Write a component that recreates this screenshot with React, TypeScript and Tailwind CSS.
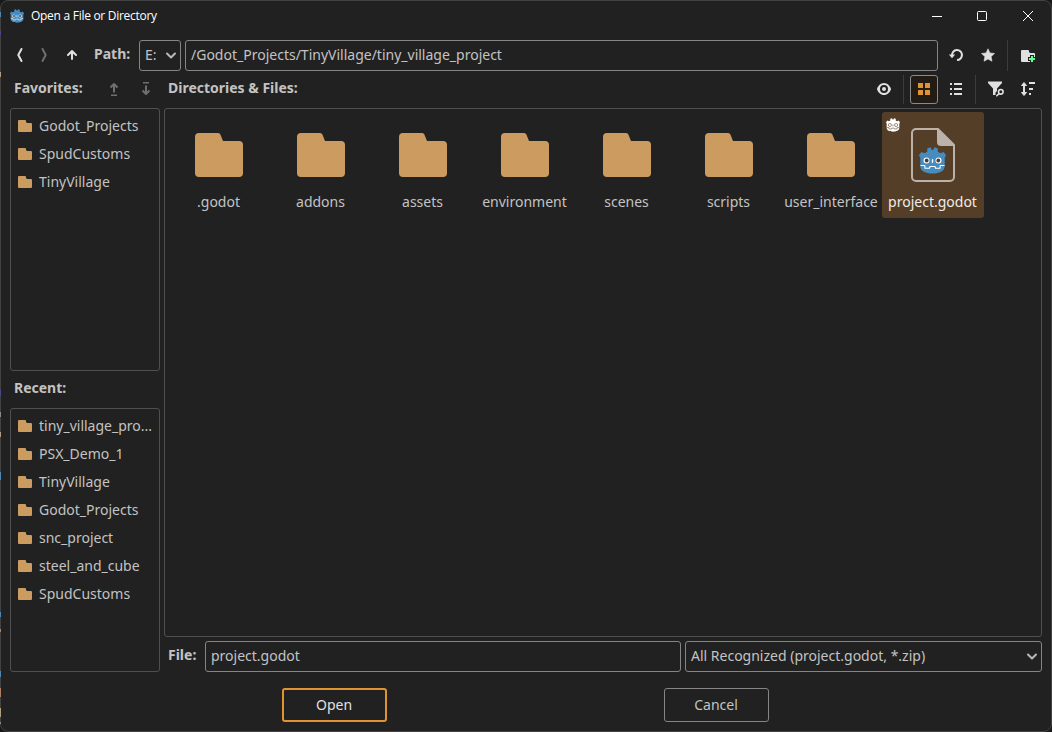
import React from "react";

type IconProps = { className?: string };

const FolderSmall = () => (
  <svg width="14" height="12" viewBox="0 0 14 12" className="shrink-0">
    <path fill="#cc9b60" d="M1 0h6a1 1 0 0 1 1 1v1l1 1h4a1 1 0 0 1 1 1v7a1 1 0 0 1-1 1H1a1 1 0 0 1-1-1V1a1 1 0 0 1 1-1z" />
  </svg>
);

const FolderBig = () => (
  <svg width="48" height="44" viewBox="0 0 48 44">
    <path fill="#cc9b60" d="M4 0h19c1.300 0 2 .7 2.500 1.800L28 8h16a4 4 0 0 1 4 4v28a4 4 0 0 1-4 4H4a4 4 0 0 1-4-4V4a4 4 0 0 1 4-4z" />
  </svg>
);

const HEAD =
  "M0 8 2.600 5 5.500 6.200 8.300 4.600 8.200 1.500 11.500 .3 12.800 3h1.400L15.500.3l3.300 1.200-.1 3.100 2.800 1.600L24.400 5 27 8l-1.300 3v8.500c0 4.500-5.700 7-12.200 7s-12.200-2.500-12.200-7V11z";

const GodotHead = ({ size, className }: { size: number; className?: string }) => (
  <svg width={size} height={size} viewBox="0 0 27 27" className={className}>
    <path fill="#478cbf" d={HEAD} />
    <circle cx="7.500" cy="13.500" r="3" fill="#fff" />
    <circle cx="19.500" cy="13.500" r="3" fill="#fff" />
    <circle cx="7.700" cy="13.500" r="1.900" fill="#414042" />
    <circle cx="19.300" cy="13.500" r="1.900" fill="#414042" />
    <path stroke="#fff" strokeWidth="1.400" strokeLinecap="round" d="M13.500 12.700v2.600" />
    <path fill="none" stroke="#fff" strokeWidth="1.100" d="M1.500 18.500h4.200l.3 2.700h4.500l.5-1.700h5l.5 1.700H21l.3-2.700h4.200" />
  </svg>
);

const GodotMono = () => (
  <svg width="14" height="14" viewBox="0 0 27 27">
    <path fill="#fff" d={HEAD} />
    <circle cx="7.500" cy="13.500" r="3" fill="#fff" stroke="#8b7a66" strokeWidth="1.600" />
    <circle cx="19.500" cy="13.500" r="3" fill="#fff" stroke="#8b7a66" strokeWidth="1.600" />
    <path stroke="#8b7a66" strokeWidth="1.600" d="M13.500 12.500v3.500" />
    <path fill="none" stroke="#8b7a66" strokeWidth="1.600" d="M1.500 18.500h4.200l.3 2.700h4.500l.5-1.700h5l.5 1.700H21l.3-2.700h4.200" />
  </svg>
);

const Svg = ({ className = "", children }: IconProps & { children: React.ReactNode }) => (
  <svg width="16" height="16" viewBox="0 0 16 16" fill="none" className={`shrink-0 ${className}`}>
    {children}
  </svg>
);

const Chevron = () => (
  <Svg className="text-[#b9b9b9]">
    <path d="m4 6.500 4 4 4-4" stroke="currentColor" strokeWidth="2" strokeLinecap="round" strokeLinejoin="round" />
  </Svg>
);

const Shift = ({ down = false }: { down?: boolean }) => (
  <Svg className={down ? "-mt-px rotate-180 text-[#6f6f6f]" : "-mt-px text-[#6f6f6f]"}>
    <path d="M8 11.500V3M4.500 6.500 8 3l3.500 3.500" stroke="currentColor" strokeWidth="2" strokeLinecap="butt" strokeLinejoin="round" />
    <path d="M5 14.250h6" stroke="currentColor" strokeWidth="1.500" />
  </Svg>
);

const SideList = ({ items, className }: { items: string[]; className: string }) => (
  <ul className={`rounded-[3px] border border-[#505050] pt-[3px] ${className}`}>
    {items.map((name) => (
      <li key={name} className="flex h-7 items-center gap-[7px] pl-[7px]">
        <FolderSmall />
        <span className="whitespace-nowrap">{name}</span>
      </li>
    ))}
  </ul>
);

const favorites = ["Godot_Projects", "SpudCustoms", "TinyVillage"];
const recent = ["tiny_village_pro...", "PSX_Demo_1", "TinyVillage", "Godot_Projects", "snc_project", "steel_and_cube", "SpudCustoms"];
const folders = [".godot", "addons", "assets", "environment", "scenes", "scripts", "user_interface"];

export default function App() {
  return (
    <div className="relative h-[732px] w-[1052px] overflow-hidden bg-[#191919]">
      <div className="flex h-[732px] w-[1052px] flex-col rounded-[8px] border border-[#424242] bg-[#212121] font-['Noto_Sans',sans-serif] text-[14px] leading-[20px] text-[#c3c3c3]">
        <header className="flex h-[30px] shrink-0 items-center pl-[9px] text-white">
          <GodotHead size={14} />
          <span className="ml-[7px] font-['Open_Sans',sans-serif] text-[12px] tracking-[-0.280px]">Open a File or Directory</span>
          <div className="ml-auto flex items-center">
            <svg width="10" height="10" className="mr-[35px]"><path d="M0 5.500h10" stroke="#fff" /></svg>
            <svg width="10" height="10" className="mr-[36px]"><rect x=".5" y=".5" width="9" height="9" rx="1" fill="none" stroke="#fff" /></svg>
            <svg width="10" height="10" className="mr-[18px]"><path d="m0 0 10 10M10 0 0 10" stroke="#fff" /></svg>
          </div>
        </header>

        <div className="mt-[9px] flex h-[31px] shrink-0 items-center pl-[11px]">
          <Svg className="-mt-px text-[#e0e0e0]"><path d="M9.500 2 6.300 8l3.200 6" stroke="currentColor" strokeWidth="2" strokeLinecap="round" strokeLinejoin="round" /></Svg>
          <Svg className="-mt-px ml-[8px] text-[#6f6f6f]"><path d="m6.500 2 3.200 6-3.200 6" stroke="currentColor" strokeWidth="2" strokeLinecap="round" strokeLinejoin="round" /></Svg>
          <Svg className="-mt-px ml-[12px] text-[#e0e0e0]"><path d="M8 12V5M4 8l4-4 4 4" stroke="currentColor" strokeWidth="2" strokeLinecap="round" strokeLinejoin="round" /></Svg>
          <span className="-mt-[3px] ml-[14px] w-[45px] font-bold">Path:</span>
          <div className="flex h-[31px] w-[42px] items-center justify-between rounded-[3px] border border-[#858585] pb-px pl-[5px] pr-[1px]">
            <span>E:</span>
            <Chevron />
          </div>
          <div className="ml-1 flex h-[31px] w-[753px] items-center rounded-[3px] border border-[#858585] pb-[2px] pl-[5px]">
            /Godot_Projects/TinyVillage/tiny_village_project
          </div>
          <Svg className="-mt-px ml-[10px] text-[#e0e0e0]">
            <path d="M4 8.500A5 5 0 1 1 9 13" stroke="currentColor" strokeWidth="2" />
            <path d="M.8 7.500h6.400L4 11.300z" fill="currentColor" />
          </Svg>
          <Svg className="-mt-px ml-[16px] text-[#e0e0e0]">
            <path d="m8 1.800 1.900 4.100 4.600.6-3.400 3.100.9 4.600L8 12l-4 2.200.9-4.600L1.500 6.500l4.600-.6z" fill="currentColor" stroke="currentColor" strokeWidth=".6" strokeLinejoin="round" />
          </Svg>
          <div className="ml-[11px] h-[31px] w-px bg-[#3c3c3c]" />
          <Svg className="ml-[12px]">
            <path fill="#e0e0e0" d="M2 2h6a1 1 0 0 1 1 1v1l1 1h4a1 1 0 0 1 1 1v3h-1V7h-4v2H8v4h2v1H2a1 1 0 0 1-1-1V3a1 1 0 0 1 1-1z" />
            <path fill="#5fff97" d="M11 8h2v2h2v2h-2v2h-2v-2H9v-2h2z" />
          </Svg>
        </div>

        <div className="mt-1 flex h-[29px] shrink-0 items-center pl-[13px]">
          <span className="-mt-[3px] w-[92px] font-bold">Favorites:</span>
          <Shift />
          <div className="w-4" />
          <Shift down />
          <span className="-mt-[3px] ml-[14px] w-[708px] font-bold">Directories &amp; Files:</span>
          <Svg className="-mt-[2px] text-[#e0e0e0]">
            <path fillRule="evenodd" fill="currentColor" d="M8 2C4.500 2 2 5 1.100 7.600a1 1 0 0 0 0 .8C2 11 4.500 14 8 14s6-3 6.900-5.600a1 1 0 0 0 0-.8C14 5 11.500 2 8 2zm0 2a4 4 0 1 1 0 8 4 4 0 0 1 0-8zm0 2a2 2 0 1 0 0 4 2 2 0 0 0 0-4z" />
          </Svg>
          <div className="ml-[11px] h-[29px] w-px bg-[#3c3c3c]" />
          <div className="ml-[6px] flex h-[29px] w-[28px] items-center justify-center rounded-[3px] border border-[#8a8a8a] bg-[#231c14] pb-px">
            <Svg className="text-[#e09431]"><path fill="currentColor" d="M2 2h5v5H2zM9 2h5v5H9zM2 9h5v5H2zM9 9h5v5H9z" /></Svg>
          </div>
          <Svg className="-mt-px ml-[10px] text-[#e0e0e0]"><path fill="currentColor" d="M2 2h2v2H2zM6 2h8v2H6zM2 7h2v2H2zM6 7h8v2H6zM2 12h2v2H2zM6 12h8v2H6z" /></Svg>
          <div className="ml-[11px] h-[29px] w-px bg-[#3c3c3c]" />
          <Svg className="-mt-px ml-[12px] text-[#e0e0e0]">
            <path fill="currentColor" d="M0 0.500h14v1.500L9 7.500V10l-1.500 1.500V14H5V7.500L0 2z" />
            <circle cx="12.800" cy="10.800" r="2.300" stroke="currentColor" strokeWidth="1.600" />
            <path d="m11 12.600-2.200 2.200" stroke="currentColor" strokeWidth="1.600" strokeLinecap="round" />
          </Svg>
          <Svg className="-mt-px ml-[16px] text-[#e0e0e0]">
            <path d="M4 3v10" stroke="currentColor" strokeWidth="2" />
            <path fill="currentColor" stroke="currentColor" strokeLinejoin="round" d="m4 1.500 2.500 3h-5zM4 14.500l2.500-3h-5z" />
            <path fill="currentColor" d="M9 1h6v2H9zM9 7h4v2H9zM9 12h2v2H9z" />
          </Svg>
        </div>

        <main className="mt-1 flex h-[564px] shrink-0 gap-1 pl-[9px] pr-[9px]">
          <aside className="flex w-[150px] shrink-0 flex-col">
            <SideList items={favorites} className="h-[263px]" />
            <div className="flex h-[37px] items-center pb-[3px] pl-1 font-bold">Recent:</div>
            <SideList items={recent} className="h-[264px]" />
          </aside>
          <section className="flex w-[878px] shrink-0 flex-col">
            <div className="h-[529px] rounded-[3px] border border-[#505050] p-[3px]">
              <div className="flex">
                {folders.map((name) => (
                  <div key={name} className="flex h-[106px] w-[102px] flex-col items-center pt-[21px]">
                    <FolderBig />
                    <span className={`mt-[15px] whitespace-nowrap ${name.length > 12 ? "" : "pr-px"}`}>{name}</span>
                  </div>
                ))}
                <div className="relative flex h-[106px] w-[102px] flex-col items-center rounded-[3px] bg-[#553e27] pt-[16px] text-[#f0ece8]">
                  <div className="absolute left-[4px] top-[6px]"><GodotMono /></div>
                  <svg width="44" height="54" viewBox="0 0 44 54">
                    <path d="M5 1h22l16 16v32a4 4 0 0 1-4 4H5a4 4 0 0 1-4-4V5a4 4 0 0 1 4-4z" fill="none" stroke="#bbb2a9" strokeWidth="2" />
                    <path d="M26 0 44 18H30a4 4 0 0 1-4-4z" fill="#bbb2a9" />
                  </svg>
                  <GodotHead size={27} className="absolute left-[37px] top-[35px]" />
                  <span className="mt-[10px] whitespace-nowrap pr-px">project.godot</span>
                </div>
              </div>
            </div>
            <div className="mt-1 flex h-[31px] items-center">
              <span className="-mt-[3px] w-[41px] pl-1 font-bold">File:</span>
              <div className="flex h-[31px] w-[476px] items-center rounded-[3px] border border-[#858585] pb-[2px] pl-[5px]">project.godot</div>
              <div className="ml-1 flex h-[31px] w-[357px] items-center justify-between rounded-[3px] border border-[#858585] pb-[2px] pl-[5px] pr-[1px]">
                <span>All Recognized (project.godot, *.zip)</span>
                <Chevron />
              </div>
            </div>
          </section>
        </main>

        <footer className="mt-4 flex h-[34px] shrink-0 pl-[281px]">
          <button className="h-[34px] w-[105px] rounded-[3px] border-2 border-[#e09431] pr-px text-[#e0e0e0]">Open</button>
          <button className="ml-[277px] h-[34px] w-[105px] rounded-[3px] border border-[#858585] pr-px">Cancel</button>
        </footer>
      </div>
      <svg width="1" height="732" className="absolute left-0 top-0">
        <path stroke="#4f87b5" strokeWidth="2" d="M0 12v5M0 472v8M0 612v5M0 671v6" />
        <path stroke="#4c4590" strokeWidth="2" d="M0 31v4M0 390v6" />
        <path stroke="#b0a080" strokeWidth="2" d="M0 72v5M0 432v5M0 708v9" />
        <path stroke="#b07f62" strokeWidth="2" d="M0 629v3M0 688v9" />
        <path stroke="#8a8a8a" strokeWidth="2" d="M0 412v5M0 722v2" />
      </svg>
    </div>
  );
}
